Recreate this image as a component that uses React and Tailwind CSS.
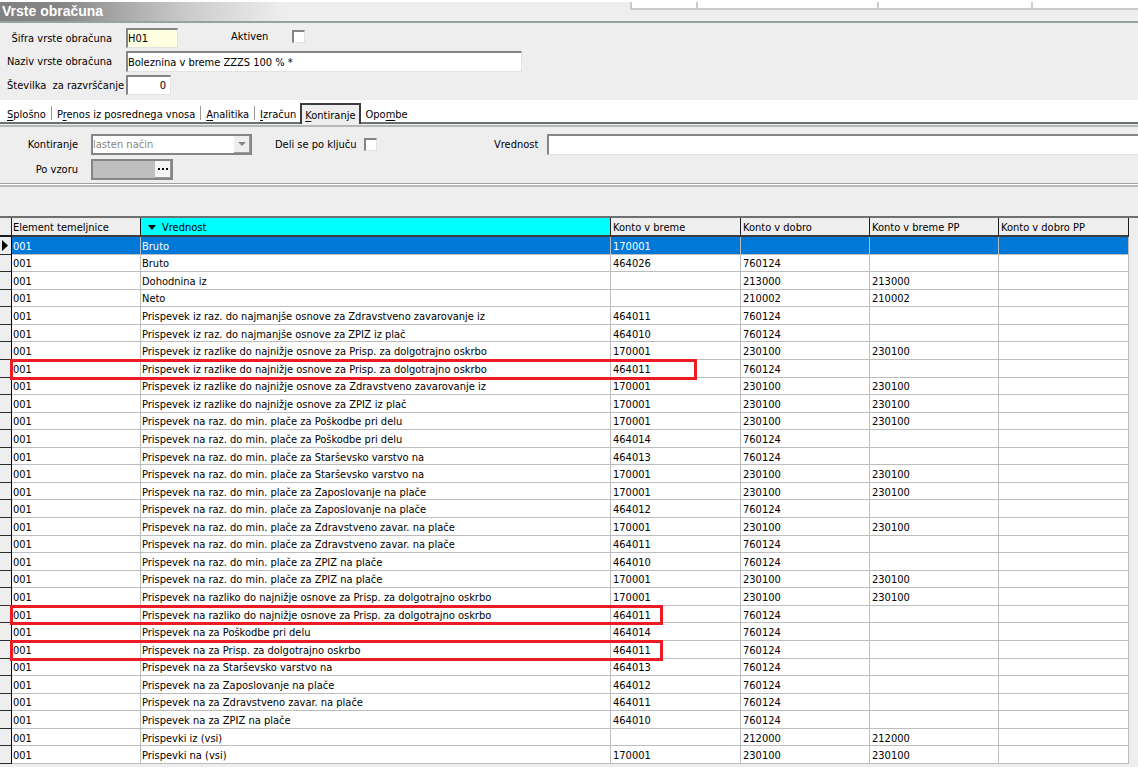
import React from "react";

const sunken =
  "border-t-2 border-l-2 border-r border-b border-t-[#858585] border-l-[#858585] border-r-[#e2e2e2] border-b-[#e2e2e2]";

const rows = [
  ["Bruto", "170001", "", ""],
  ["Bruto", "464026", "760124", ""],
  ["Dohodnina iz", "", "213000", "213000"],
  ["Neto", "", "210002", "210002"],
  ["Prispevek iz raz. do najmanjše osnove za Zdravstveno zavarovanje iz", "464011", "760124", ""],
  ["Prispevek iz raz. do najmanjše osnove za ZPIZ iz plač", "464010", "760124", ""],
  ["Prispevek iz razlike do najnižje osnove za Prisp. za dolgotrajno oskrbo", "170001", "230100", "230100"],
  ["Prispevek iz razlike do najnižje osnove za Prisp. za dolgotrajno oskrbo", "464011", "760124", "", "w-[687px]"],
  ["Prispevek iz razlike do najnižje osnove za Zdravstveno zavarovanje iz", "170001", "230100", "230100"],
  ["Prispevek iz razlike do najnižje osnove za ZPIZ iz plač", "170001", "230100", "230100"],
  ["Prispevek na raz. do min. plače za Poškodbe pri delu", "170001", "230100", "230100"],
  ["Prispevek na raz. do min. plače za Poškodbe pri delu", "464014", "760124", ""],
  ["Prispevek na raz. do min. plače za Starševsko varstvo na", "464013", "760124", ""],
  ["Prispevek na raz. do min. plače za Starševsko varstvo na", "170001", "230100", "230100"],
  ["Prispevek na raz. do min. plače za Zaposlovanje na plače", "170001", "230100", "230100"],
  ["Prispevek na raz. do min. plače za Zaposlovanje na plače", "464012", "760124", ""],
  ["Prispevek na raz. do min. plače za Zdravstveno zavar. na plače", "170001", "230100", "230100"],
  ["Prispevek na raz. do min. plače za Zdravstveno zavar. na plače", "464011", "760124", ""],
  ["Prispevek na raz. do min. plače za ZPIZ na plače", "464010", "760124", ""],
  ["Prispevek na raz. do min. plače za ZPIZ na plače", "170001", "230100", "230100"],
  ["Prispevek na razliko do najnižje osnove za Prisp. za dolgotrajno oskrbo", "170001", "230100", "230100"],
  ["Prispevek na razliko do najnižje osnove za Prisp. za dolgotrajno oskrbo", "464011", "760124", "", "w-[653px]"],
  ["Prispevek na za Poškodbe pri delu", "464014", "760124", ""],
  ["Prispevek na za Prisp. za dolgotrajno oskrbo", "464011", "760124", "", "w-[653px]"],
  ["Prispevek na za Starševsko varstvo na", "464013", "760124", ""],
  ["Prispevek na za Zaposlovanje na plače", "464012", "760124", ""],
  ["Prispevek na za Zdravstveno zavar. na plače", "464011", "760124", ""],
  ["Prispevek na za ZPIZ na plače", "464010", "760124", ""],
  ["Prispevki iz (vsi)", "", "212000", "212000"],
  ["Prispevki na (vsi)", "170001", "230100", "230100"],
];

const tabs = [
  ["", "S", "plošno"],
  ["P", "r", "enos iz posrednega vnosa"],
  ["", "A", "nalitika"],
  ["", "I", "zračun"],
  ["", "K", "ontiranje"],
  ["Opo", "m", "be"],
];

function CheckBox({ id }) {
  return (
    <input
      id={id}
      type="checkbox"
      className={"size-[13px] shrink-0 appearance-none bg-white " + sunken}
    />
  );
}

function Header() {
  return (
    <header className="flex h-[23px] shrink-0 justify-between border-t-2 border-b-2 border-t-white border-b-[#9aa39b] bg-[linear-gradient(to_right,#828282_0,#858585_60px,#a8a8a8_120px,#cccccc_190px,#eeeeee_285px)]">
      <h1 className="pl-[2px] font-['Liberation_Sans',sans-serif] text-[14px] leading-[19px] font-bold text-white">
        Vrste obračuna
      </h1>
      <div className="flex h-[8px] w-[508px] border-b-2 border-l-2 border-[#cccccc] bg-white">
        <div className="w-[66px] border-r-2 border-[#cccccc]" />
        <div className="w-[181px] border-r-2 border-[#cccccc]" />
        <div className="w-[154px] border-r-2 border-[#cccccc]" />
      </div>
    </header>
  );
}

function BasicData() {
  return (
    <section className="flex h-[77px] shrink-0 flex-col gap-[3px] pt-[5px]">
      <div className="flex h-[20px] items-center">
        <label htmlFor="sifra" className="w-[126px] pr-[14px] text-right">
          Šifra vrste obračuna
        </label>
        <input id="sifra" defaultValue="H01" className={"h-[20px] w-[52px] bg-[#ffffe1] outline-none " + sunken} />
        <div className="ml-[53px] flex items-center self-start pt-[2px]">
          <label htmlFor="aktiven" className="w-[61px]">
            Aktiven
          </label>
          <CheckBox id="aktiven" />
        </div>
      </div>
      <div className="flex h-[21px] items-center">
        <label htmlFor="naziv" className="w-[126px] pr-[14px] text-right">
          Naziv vrste obračuna
        </label>
        <input
          id="naziv"
          defaultValue="Boleznina v breme ZZZS 100 % *"
          className={"h-[21px] w-[396px] bg-white outline-none " + sunken}
        />
      </div>
      <div className="flex h-[20px] items-center">
        <label htmlFor="stevilka" className="w-[126px] pr-[2px] text-right whitespace-pre">
          {"Številka  za razvrščanje"}
        </label>
        <input
          id="stevilka"
          defaultValue="0"
          className={"h-[20px] w-[45px] bg-white pr-[4px] text-right outline-none " + sunken}
        />
      </div>
    </section>
  );
}

function TabBar() {
  return (
    <nav role="tablist" className="flex h-[24px] shrink-0 items-end border-b-2 border-[#6d706e] bg-white pl-[2px]">
      {tabs.map(([pre, key, post], i) => {
        const active = i === 4;
        const divided = i < 3;
        return (
          <button
            key={key}
            type="button"
            role="tab"
            aria-selected={active}
            className={
              active
                ? "-mb-[2px] h-[21px] border-2 border-b-0 border-[#3c3c3c] bg-[#eeeeee] px-[3px] pt-[1px] whitespace-nowrap"
                : "flex h-[15px] items-center pl-[5px] whitespace-nowrap"
            }
          >
            <span>
              {pre}
              <span className="underline underline-offset-2">{key}</span>
              {post}
            </span>
            {divided && <span className="mb-[3px] ml-[5px] h-[14px] w-px bg-[#9a9a9a]" />}
            {i === 3 && <span className="w-[4px]" />}
          </button>
        );
      })}
    </nav>
  );
}

function PostingForm() {
  return (
    <section className="mt-[1px] h-[58px] shrink-0 border-t-2 border-[#b4bab4] pt-[7px]">
      <div className="flex h-[21px] items-center">
        <label htmlFor="kontiranje" className="w-[91px] pr-[13px] text-right">
          Kontiranje
        </label>
        <div className="relative h-[21px] w-[161px]">
          <select
            id="kontiranje"
            disabled
            className="h-full w-full appearance-none border-2 border-[#858585] bg-white text-[#858585] opacity-100"
          >
            <option>lasten način</option>
          </select>
          <span className="pointer-events-none absolute top-[2px] right-[2px] flex h-[17px] w-[16px] items-center justify-center border-r border-b border-[#9a9a9a] bg-[#eeeeee]">
            <svg viewBox="0 0 8 4" className="h-[4px] w-[8px]">
              <path d="M0 0h8L4 4z" fill="#858585" />
            </svg>
          </span>
        </div>
        <label htmlFor="deli" className="ml-[23px] w-[89px]">
          Deli se po ključu
        </label>
        <CheckBox id="deli" />
        <label htmlFor="vrednost" className="ml-[117px] w-[53px]">
          Vrednost
        </label>
        <input
          id="vrednost"
          className="h-[21px] min-w-0 flex-1 border-t-2 border-b border-l-2 border-t-[#858585] border-b-[#e2e2e2] border-l-[#858585] bg-white outline-none"
        />
      </div>
      <div className="mt-[4px] flex h-[21px] items-center">
        <label htmlFor="vzor" className="w-[91px] pr-[13px] text-right">
          Po vzoru
        </label>
        <div className="flex h-[21px] w-[82px] border-2 border-[#858585]">
          <input id="vzor" className="min-w-0 flex-1 bg-[#bfbfbf] outline-none" />
          <button
            type="button"
            aria-label="Izberi"
            className="flex w-[16px] items-center justify-center gap-[2px] border-r border-b border-[#9a9a9a] bg-[#f4f4f4]"
          >
            <span className="size-[2px] bg-black" />
            <span className="size-[2px] bg-black" />
            <span className="size-[2px] bg-black" />
          </button>
        </div>
      </div>
    </section>
  );
}

const headCell = "border-r border-b-2 border-r-[#1c1c1c] border-b-[#3c3c3c] pt-[2px] pb-0 text-left font-normal whitespace-nowrap";

function HeadCell({ children, pad }) {
  return (
    <th scope="col" className={headCell + " bg-[#eeeeee] " + pad}>
      {children}
    </th>
  );
}

function Grid() {
  const cell = "border-r border-b border-[#bdbdbd] pt-[2px] pb-0 whitespace-nowrap";
  return (
    <div className="mr-[9px] min-h-0 flex-1">
      <table className="h-full w-full table-fixed border-separate border-spacing-0">
        <colgroup>
          <col className="w-[12px]" />
          <col className="w-[129px]" />
          <col />
          <col className="w-[130px]" />
          <col className="w-[129px]" />
          <col className="w-[129px]" />
          <col className="w-[130px]" />
        </colgroup>
        <thead>
          <tr className="h-[19px]">
            <th className="border-r border-b-2 border-[#1c1c1c] bg-[#eeeeee] p-0" />
            <HeadCell pad="pl-[1px]">Element temeljnice</HeadCell>
            <th scope="col" className={headCell + " bg-[#00ffff] pl-[7px]"}>
              <span className="flex items-center gap-[6px]">
                <svg viewBox="0 0 8 5" className="h-[5px] w-[8px]">
                  <path d="M0 0h8L4 5z" fill="#000" />
                </svg>
                Vrednost
              </span>
            </th>
            <HeadCell pad="pl-[2px]">Konto v breme</HeadCell>
            <HeadCell pad="pl-[2px]">Konto v dobro</HeadCell>
            <HeadCell pad="pl-[2px]">Konto v breme PP</HeadCell>
            <HeadCell pad="pl-[2px]">Konto v dobro PP</HeadCell>
          </tr>
        </thead>
        <tbody>
          {rows.map(([name, debit, credit, debitPP, frame], i) => (
            <tr key={i} className={i === 0 ? "bg-[#0078d7] text-white" : "bg-white"}>
              <td className="border-r border-b border-r-black border-b-[#2c2c2c] bg-[#eeeeee] p-0">
                {i === 0 && (
                  <svg viewBox="0 0 6 11" className="ml-[2px] h-[11px] w-[6px]">
                    <path d="M0 0L6 5.5L0 11z" fill="#000" />
                  </svg>
                )}
              </td>
              <td className={cell + " relative pl-[1px]"}>
                001
                {frame && (
                  <span
                    className={
                      "pointer-events-none absolute -top-[1px] -bottom-[3px] -left-[2px] z-10 border-3 border-[#ed1c24] " +
                      frame
                    }
                  />
                )}
              </td>
              <td className={cell + " pl-[1px]"}>{name}</td>
              <td className={cell + " pl-[2px]"}>{debit}</td>
              <td className={cell + " pl-[2px]"}>{credit}</td>
              <td className={cell + " pl-[2px]"}>{debitPP}</td>
              <td className={cell} />
            </tr>
          ))}
        </tbody>
      </table>
    </div>
  );
}

export default function App() {
  return (
    <main className="flex h-screen min-h-[700px] flex-col bg-[#eeeeee] font-['DejaVu_Sans_Condensed','DejaVu_Sans',sans-serif] text-[11px] leading-[13px] text-black">
      <Header />
      <BasicData />
      <TabBar />
      <PostingForm />
      <div className="h-[35px] shrink-0 border-b-2 border-[#6d706e]">
        <div className="h-[4px] border-t border-b-2 border-t-[#a0a0a0] border-b-[#b8bbb8] bg-white" />
      </div>
      <Grid />
      <div className="h-[5px] shrink-0 border-b-2 border-white" />
    </main>
  );
}
